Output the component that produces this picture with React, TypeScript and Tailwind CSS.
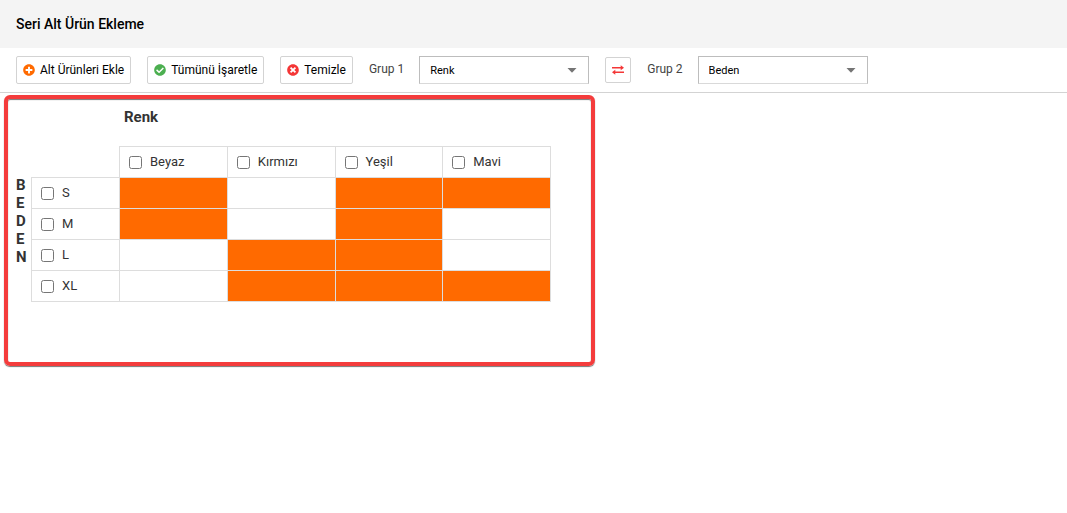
import React, { useState } from 'react';
import { FaCheckCircle, FaPlusCircle, FaTimesCircle } from 'react-icons/fa';

const GROUPS: Record<string, string[]> = {
  Renk: ['Beyaz', 'Kırmızı', 'Yeşil', 'Mavi'],
  Beden: ['S', 'M', 'L', 'XL'],
};

const INITIAL_CELLS = [
  [true, false, true, true],
  [true, false, true, false],
  [false, true, true, false],
  [false, true, true, true],
];

interface ToolbarButtonProps {
  icon: React.ReactNode;
  label: string;
  onClick?: () => void;
}

const ToolbarButton: React.FC<ToolbarButtonProps> = ({ icon, label, onClick }) => (
  <button
    type="button"
    onClick={onClick}
    className="flex h-7 items-center gap-[5px] whitespace-nowrap rounded-xs border border-[#d3d3d3] bg-white px-1.5 text-xs text-black hover:bg-gray-50"
  >
    {icon}
    {label}
  </button>
);

interface GroupSelectProps {
  id: string;
  label: string;
  value: string;
  onChange: (value: string) => void;
}

const GroupSelect: React.FC<GroupSelectProps> = ({ id, label, value, onChange }) => (
  <div className="flex items-center gap-[15px]">
    <label htmlFor={id} className="whitespace-nowrap pb-0.5 text-xs text-[#444]">
      {label}
    </label>
    <div className="relative">
      <select
        id={id}
        value={value}
        onChange={(e) => onChange(e.target.value)}
        className="block h-7 w-[170px] appearance-none border border-[#bdbdbd] border-b-[#d9d9d9] bg-white px-2.5 pt-0.5 text-[11px] text-black"
      >
        {Object.keys(GROUPS).map((name) => (
          <option key={name}>{name}</option>
        ))}
      </select>
      <svg viewBox="0 0 10 5" className="pointer-events-none absolute right-3 top-3 h-[5px] w-2.5 fill-[#757575]">
        <path d="M0.5 0h9L5 4.8z" />
      </svg>
    </div>
  </div>
);

const CheckLabel: React.FC<{ label: string }> = ({ label }) => (
  <label className="flex items-center gap-2 pl-[9px] text-[13px] font-normal">
    <input type="checkbox" className="size-[13px]" />
    {label}
  </label>
);

export default function App() {
  const [first, setFirst] = useState('Renk');
  const [second, setSecond] = useState('Beden');
  const [cells, setCells] = useState(INITIAL_CELLS);

  const fillAll = (value: boolean) => setCells(cells.map((row) => row.map(() => value)));

  const toggleCell = (r: number, c: number) =>
    setCells(cells.map((row, i) => row.map((on, j) => (i === r && j === c ? !on : on))));

  const swapGroups = () => {
    setFirst(second);
    setSecond(first);
  };

  return (
    <div className="min-h-screen bg-white font-[Roboto,sans-serif] text-[#333]">
      <header className="flex h-12 items-center bg-[#f4f4f4] px-4">
        <h1 className="text-sm font-medium text-black">Seri Alt Ürün Ekleme</h1>
      </header>

      {/* Toolbar */}
      <div className="flex flex-wrap items-center gap-4 border-b border-[#d3d3d3] px-4 py-2">
        <ToolbarButton icon={<FaPlusCircle className="size-3 text-[#ff6a00]" />} label="Alt Ürünleri Ekle" />
        <ToolbarButton
          icon={<FaCheckCircle className="size-3 text-[#4caf50]" />}
          label="Tümünü İşaretle"
          onClick={() => fillAll(true)}
        />
        <ToolbarButton
          icon={<FaTimesCircle className="size-3 text-[#f43636]" />}
          label="Temizle"
          onClick={() => fillAll(false)}
        />
        <GroupSelect id="group-1" label="Grup 1" value={first} onChange={setFirst} />
        <button
          type="button"
          aria-label="Grupları değiştir"
          onClick={swapGroups}
          className="flex size-[26px] items-center justify-center rounded-xs border border-[#d3d3d3] bg-white hover:bg-gray-50"
        >
          <svg viewBox="0 0 12 10" className="h-2.5 w-3 fill-[#f43636]">
            <path d="M0 2h8.7V0.2L12 2.7 8.7 5.2V3.4H0z" />
            <path d="M12 6.6H3.3V4.8L0 7.3l3.3 2.5V8H12z" />
          </svg>
        </button>
        <GroupSelect id="group-2" label="Grup 2" value={second} onChange={setSecond} />
      </div>

      {/* Variant matrix */}
      <main className="mx-1 mt-0.5 max-w-[591px] rounded-md border-4 border-[#f43c3c] px-2 pt-2 pb-[60px] shadow-[0_1px_1px_#777,inset_0_1px_1px_#777]">
        <h2 className="pl-[108px] text-[15px] leading-5 font-bold">{first}</h2>
        <div className="mt-[19px] flex">
          <div className="flex w-[15px] flex-col pt-[30px] text-[15px] leading-[18px] font-bold uppercase">
            {second.split('').map((letter, i) => (
              <span key={i}>{letter}</span>
            ))}
          </div>
          <table className="w-full max-w-[520px] table-fixed border-collapse">
            <thead>
              <tr className="h-[31px]">
                <td className="w-[88px]" />
                {GROUPS[first].map((name) => (
                  <th key={name} scope="col" className="border border-[#ddd] p-0">
                    <CheckLabel label={name} />
                  </th>
                ))}
              </tr>
            </thead>
            <tbody>
              {GROUPS[second].map((name, r) => (
                <tr key={name} className="h-[31px]">
                  <th scope="row" className="border border-[#ddd] p-0">
                    <CheckLabel label={name} />
                  </th>
                  {GROUPS[first].map((column, c) => (
                    <td key={column} className="border border-[#ddd] p-0">
                      <button
                        type="button"
                        aria-label={`${column} ${name}`}
                        aria-pressed={cells[r][c]}
                        onClick={() => toggleCell(r, c)}
                        className={`block h-[30px] w-full ${cells[r][c] ? 'bg-[#ff6a00]' : 'bg-white'}`}
                      />
                    </td>
                  ))}
                </tr>
              ))}
            </tbody>
          </table>
        </div>
      </main>
    </div>
  );
}
